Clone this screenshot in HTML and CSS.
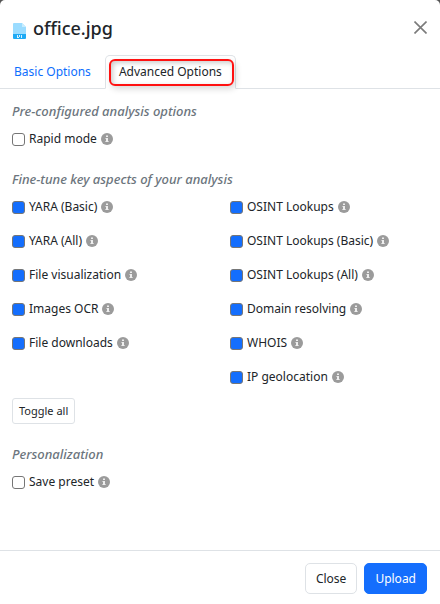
FILE: index.html
```html
<!DOCTYPE html>
<html lang="en">
<head>
    <meta charset="UTF-8">
    <meta name="viewport" content="width=device-width, initial-scale=1.0">
    <title>office.jpg</title>
    <link rel="stylesheet" href="styles.css">
</head>
<body>
    <!-- Info icon, reused next to every option -->
    <svg width="0" height="0" class="sprite" aria-hidden="true">
        <symbol id="info" viewBox="0 0 12 12">
            <circle cx="6" cy="6" r="6" fill="#9b9b9b"/>
            <path d="M5 2.5h2v1.6H5zM4.5 5H7v3h.6v1H4.4V8H5V6h-.5z" fill="#eee"/>
        </symbol>
    </svg>

    <div class="modal">
        <header class="modal-header">
            <svg class="file-icon" width="13" height="16" viewBox="0 0 13 16" aria-hidden="true">
                <path d="M1 0h8l4 4v7H0V1a1 1 0 0 1 1-1z" fill="#9bdcff"/>
                <path d="M9 0l4 4H9z" fill="#c8edff"/>
                <path d="M0 11h13v4a1 1 0 0 1-1 1H1a1 1 0 0 1-1-1z" fill="#1eaaf5"/>
                <path d="M4 12h1v3H4zM5 14h1v1H5zM6 12h1v2H6zM8 12h1v3H8z" fill="#d8f2ff"/>
            </svg>
            <h1>office.jpg</h1>
            <button type="button" class="btn-close" aria-label="Close dialog">
                <svg width="13" height="13" viewBox="0 0 13 13"><path d="M.5.5l12 12M12.5.5l-12 12" stroke="#7b7b7b" stroke-width="1.6"/></svg>
            </button>
        </header>

        <nav class="tabs">
            <a href="#basic" class="tab">Basic Options</a>
            <a href="#advanced" class="tab active">Advanced Options</a>
        </nav>

        <main class="modal-body">
            <section>
                <h2>Pre-configured analysis options</h2>
                <div class="option">
                    <input type="checkbox" id="rapid"><label for="rapid">Rapid mode</label>
                    <svg class="info"><use href="#info"/></svg>
                </div>
            </section>

            <section>
                <h2>Fine-tune key aspects of your analysis</h2>
                <div class="columns">
                    <div class="column">
                        <div class="option">
                            <input type="checkbox" id="yara-basic" checked><label for="yara-basic">YARA (Basic)</label>
                            <svg class="info"><use href="#info"/></svg>
                        </div>
                        <div class="option">
                            <input type="checkbox" id="yara-all" checked><label for="yara-all">YARA (All)</label>
                            <svg class="info"><use href="#info"/></svg>
                        </div>
                        <div class="option">
                            <input type="checkbox" id="visualization" checked><label for="visualization">File visualization</label>
                            <svg class="info"><use href="#info"/></svg>
                        </div>
                        <div class="option">
                            <input type="checkbox" id="ocr" checked><label for="ocr">Images OCR</label>
                            <svg class="info"><use href="#info"/></svg>
                        </div>
                        <div class="option">
                            <input type="checkbox" id="downloads" checked><label for="downloads">File downloads</label>
                            <svg class="info"><use href="#info"/></svg>
                        </div>
                    </div>
                    <div class="column">
                        <div class="option">
                            <input type="checkbox" id="osint" checked><label for="osint">OSINT Lookups</label>
                            <svg class="info"><use href="#info"/></svg>
                        </div>
                        <div class="option">
                            <input type="checkbox" id="osint-basic" checked><label for="osint-basic">OSINT Lookups (Basic)</label>
                            <svg class="info"><use href="#info"/></svg>
                        </div>
                        <div class="option">
                            <input type="checkbox" id="osint-all" checked><label for="osint-all">OSINT Lookups (All)</label>
                            <svg class="info"><use href="#info"/></svg>
                        </div>
                        <div class="option">
                            <input type="checkbox" id="domain" checked><label for="domain">Domain resolving</label>
                            <svg class="info"><use href="#info"/></svg>
                        </div>
                        <div class="option">
                            <input type="checkbox" id="whois" checked><label for="whois">WHOIS</label>
                            <svg class="info"><use href="#info"/></svg>
                        </div>
                        <div class="option">
                            <input type="checkbox" id="geo" checked><label for="geo">IP geolocation</label>
                            <svg class="info"><use href="#info"/></svg>
                        </div>
                    </div>
                </div>
                <button type="button" class="btn btn-small">Toggle all</button>
            </section>

            <section>
                <h2>Personalization</h2>
                <div class="option">
                    <input type="checkbox" id="preset"><label for="preset">Save preset</label>
                    <svg class="info"><use href="#info"/></svg>
                </div>
            </section>
        </main>

        <footer class="modal-footer">
            <button type="button" class="btn">Close</button>
            <button type="submit" class="btn btn-primary">Upload</button>
        </footer>
    </div>
</body>
</html>
```

FILE: styles.css
```css
* {
    box-sizing: border-box;
}

body {
    margin: 0;
    background-color: #555;
    color: #212529;
    font-family: "Noto Sans", "Open Sans", sans-serif;
    font-size: 12px;
    line-height: 20px;
}

.sprite {
    position: absolute;
}

.modal {
    display: flex;
    flex-direction: column;
    min-height: 100vh;
    background-color: #fff;
    border-radius: 5px 5px 0 0;
}

/* Header */
.modal-header {
    display: flex;
    align-items: center;
    gap: 7px;
    height: 55px;
    padding: 0 13px;
}

.file-icon {
    margin-top: 6px;
}

h1 {
    margin: 0;
    font-size: 18px;
    font-weight: 500;
    line-height: 24px;
}

.btn-close {
    display: flex;
    margin-left: auto;
    padding: 0;
    border: 0;
    background: none;
    cursor: pointer;
}

/* Tabs */
.tabs {
    display: flex;
    border-bottom: 1px solid #dee2e6;
}

.tab {
    margin-bottom: -1px;
    padding: 6px 13px;
    border: 1px solid transparent;
    border-radius: 5px 5px 0 0;
    color: #0d6efd;
    text-decoration: none;
}

.tab.active {
    position: relative;
    border-color: #dee2e6;
    border-bottom-color: #fff;
    background-color: #fff;
    color: #212529;
}

/* Red highlight ring */
.tab.active::after {
    content: "";
    position: absolute;
    inset: 3px 1px 2px 3px;
    border: 2px solid #f11;
    border-radius: 6px;
    box-shadow: 2px 3px 6px rgba(0, 0, 0, 0.15), inset 2px 2px 5px rgba(0, 0, 0, 0.2);
    pointer-events: none;
}

/* Body */
.modal-body {
    flex: 1;
    display: flex;
    flex-direction: column;
    gap: 20px;
    padding: 12px;
}

h2 {
    margin: 0 0 8px;
    color: #6c757d;
    font-size: 13px;
    font-style: italic;
    font-weight: 500;
    line-height: 20px;
}

.columns {
    display: grid;
    grid-template-columns: 1fr 1fr;
    gap: 20px;
}

.column {
    display: flex;
    flex-direction: column;
    gap: 14px;
}

.option {
    display: flex;
    align-items: center;
    gap: 4px;
    white-space: nowrap;
}

.option input {
    appearance: none;
    width: 13px;
    height: 13px;
    margin: 0;
    border: 1px solid #767676;
    border-radius: 3px;
    background-color: #fff;
}

.option input:checked {
    background-color: #146efd;
}

.info {
    width: 12px;
    height: 12px;
}

/* Buttons */
.btn {
    height: 31px;
    padding: 0 10px;
    border: 1px solid #dee2e6;
    border-radius: 5px;
    background-color: #fff;
    color: #212529;
    font: inherit;
    cursor: pointer;
}

.btn-small {
    height: 26px;
    margin-top: 11px;
    padding: 0 6px;
    border-radius: 3px;
    font-size: 11px;
}

.btn-primary {
    border-color: #146efd;
    background-color: #146efd;
    color: #fff;
}

.modal-footer {
    display: flex;
    justify-content: flex-end;
    gap: 7px;
    padding: 12px 13px 10px;
    border-top: 1px solid #dee2e6;
}
```
